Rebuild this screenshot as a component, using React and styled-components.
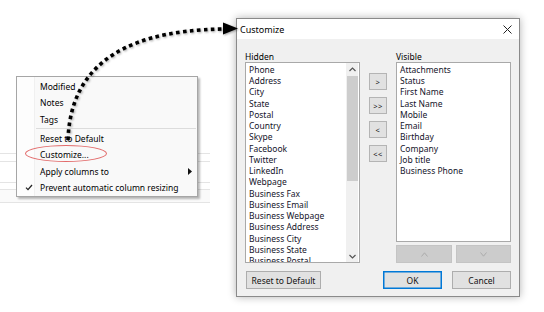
import React from "react";
import styled, { createGlobalStyle } from "styled-components";

const hiddenFields = [
  "Phone", "Address", "City", "State", "Postal", "Country", "Skype",
  "Facebook", "Twitter", "LinkedIn", "Webpage", "Business Fax",
  "Business Email", "Business Webpage", "Business Address",
  "Business City", "Business State", "Business Postal",
];

const visibleFields = [
  "Attachments", "Status", "First Name", "Last Name", "Mobile", "Email",
  "Birthday", "Company", "Job title", "Business Phone",
];

const menuItems = [
  { label: "Modified" },
  { label: "Notes" },
  { label: "Tags" },
  { sep: true },
  { label: "Reset to Default" },
  { label: "Customize..." },
  { label: "Apply columns to", sub: true },
  { label: "Prevent automatic column resizing", checked: true },
];

const backdropRows = [7, 20, 6, 12];

const App = () => {
  return (
    <>
      <GlobalStyle />
      <Stage>
        <LeftPane>
          <Backdrop>
            {backdropRows.map((h, i) => (
              <BackdropRow key={i} $h={h} $last={i === backdropRows.length - 1} />
            ))}
          </Backdrop>
        </LeftPane>

        <ContextMenu>
          {menuItems.map((item, i) =>
            item.sep ? (
              <Separator key={i} />
            ) : (
              <MenuItem key={i}>
                <Gutter>
                  {item.checked && (
                    <svg width="8" height="7" viewBox="0 0 8 7">
                      <path d="M1 3.6 L3 5.6 L7 1" fill="none" stroke="#222" strokeWidth="1.3" />
                    </svg>
                  )}
                </Gutter>
                <span>{item.label}</span>
                {item.sub && (
                  <SubArrow>
                    <svg width="4" height="7" viewBox="0 0 4 7">
                      <path d="M0 0 L4 3.5 L0 7 Z" fill="#111" />
                    </svg>
                  </SubArrow>
                )}
              </MenuItem>
            )
          )}
        </ContextMenu>
        <Highlight />

        <Dialog>
          <TitleBar>
            <span>Customize</span>
            <svg width="9" height="9" viewBox="0 0 9 9">
              <path d="M0.5 0.5 L8.5 8.5 M8.5 0.5 L0.5 8.5" stroke="#222" strokeWidth="1" />
            </svg>
          </TitleBar>
          <Body>
            <Columns>
              <Column>
                <Label>Hidden</Label>
                <ListBox $h={201}>
                  <ListItems>
                    {hiddenFields.map((f) => (
                      <ListItem key={f}>{f}</ListItem>
                    ))}
                  </ListItems>
                  <ScrollBar>
                    <ScrollArrow>
                      <svg width="7" height="5" viewBox="0 0 7 5">
                        <path d="M0.5 4 L3.5 1 L6.5 4" fill="none" stroke="#555" strokeWidth="1.2" />
                      </svg>
                    </ScrollArrow>
                    <Track>
                      <Thumb />
                    </Track>
                    <ScrollArrow>
                      <svg width="7" height="5" viewBox="0 0 7 5">
                        <path d="M0.5 1 L3.5 4 L6.5 1" fill="none" stroke="#555" strokeWidth="1.2" />
                      </svg>
                    </ScrollArrow>
                  </ScrollBar>
                </ListBox>
              </Column>

              <MoveButtons>
                <SmallButton>&gt;</SmallButton>
                <SmallButton>&gt;&gt;</SmallButton>
                <SmallButton>&lt;</SmallButton>
                <SmallButton>&lt;&lt;</SmallButton>
              </MoveButtons>

              <Column>
                <Label>Visible</Label>
                <ListBox $h={180}>
                  <ListItems>
                    {visibleFields.map((f) => (
                      <ListItem key={f}>{f}</ListItem>
                    ))}
                  </ListItems>
                </ListBox>
                <OrderRow>
                  <OrderButton>
                    <svg width="7" height="5" viewBox="0 0 7 5">
                      <path d="M0.5 4.5 L3.5 0.8 L6.5 4.5" fill="none" stroke="#a8a8a8" strokeWidth="0.9" />
                    </svg>
                  </OrderButton>
                  <OrderButton>
                    <svg width="7" height="5" viewBox="0 0 7 5">
                      <path d="M0.5 0.5 L3.5 4.2 L6.5 0.5" fill="none" stroke="#a8a8a8" strokeWidth="0.9" />
                    </svg>
                  </OrderButton>
                </OrderRow>
              </Column>
            </Columns>

            <Footer>
              <Button $w={75}>Reset to Default</Button>
              <FooterRight>
                <Button $w={59} $primary>OK</Button>
                <Button $w={59}>Cancel</Button>
              </FooterRight>
            </Footer>
          </Body>
        </Dialog>

        <ArrowLayer width="544" height="312" viewBox="0 0 544 312">
          <path
            d="M68 140 C70 78 108 30 225 29"
            fill="none"
            stroke="#000"
            strokeWidth="3.6"
            strokeDasharray="3.6 3.4"
          />
          <polygon points="223,22.5 238,28.5 223,34.5" fill="#000" />
        </ArrowLayer>
      </Stage>
    </>
  );
};

const GlobalStyle = createGlobalStyle`
  html, body {
    margin: 0;
    padding: 0;
    background: #fff;
  }
  body {
    font-family: "Noto Sans", "Open Sans", sans-serif;
    color: #111;
  }
`;

const Stage = styled.div`
  position: relative;
  width: 544px;
  height: 312px;
  overflow: hidden;
  display: flex;
  background: #fff;
`;

const LeftPane = styled.div`
  width: 236px;
  flex-shrink: 0;
  padding-top: 153px;
  box-sizing: border-box;
`;

const Backdrop = styled.div`
  width: 210px;
  display: flex;
  flex-direction: column;
`;

const BackdropRow = styled.div`
  height: ${(p) => p.$h}px;
  border-top: 1px solid #e4e4e4;
  border-bottom: ${(p) => (p.$last ? "1px solid #e4e4e4" : "none")};
  background: ${(p) => (p.$last ? "#fafafa" : "transparent")};
`;

const ContextMenu = styled.div`
  position: absolute;
  left: 16px;
  top: 76px;
  width: 182px;
  box-sizing: border-box;
  border: 1px solid #a6a6a6;
  box-shadow: 2px 2px 2px rgba(0, 0, 0, 0.28);
  padding: 1px 0 0;
  font-size: 8.5px;
  color: #000;
  background: linear-gradient(to right, #fdfdfd 0, #fdfdfd 17px, #f0f0f0 17px, #f0f0f0 18px, #f9f9f9 18px);
`;

const MenuItem = styled.div`
  height: 16.5px;
  display: flex;
  align-items: center;
  white-space: nowrap;
`;

const Gutter = styled.div`
  width: 23px;
  display: flex;
  justify-content: center;
  align-items: center;
`;

const SubArrow = styled.div`
  margin-left: auto;
  margin-right: 5px;
  display: flex;
  align-items: center;
`;

const Separator = styled.div`
  height: 1px;
  margin: 0.5px 1px 1px 19px;
  background: #dcdcdc;
`;

const Highlight = styled.div`
  position: absolute;
  left: 25px;
  top: 145px;
  width: 82px;
  height: 17px;
  border: 1.4px solid #e26a6a;
  border-radius: 50%;
  box-sizing: border-box;
`;

const Dialog = styled.div`
  margin-top: 18px;
  width: 284px;
  height: 279px;
  box-sizing: border-box;
  border: 1px solid #8a8a8a;
  background: #f0f0f0;
  box-shadow: 0 0 8px rgba(0, 0, 0, 0.3);
  display: flex;
  flex-direction: column;
  font-size: 8.5px;
`;

const TitleBar = styled.div`
  height: 20px;
  background: #fff;
  display: flex;
  align-items: center;
  justify-content: space-between;
  padding: 0 7px 0 3px;
  font-size: 9px;
  color: #000;
  flex-shrink: 0;
`;

const Body = styled.div`
  flex: 1;
  padding: 10px 8px 0 8px;
  display: flex;
  flex-direction: column;
`;

const Columns = styled.div`
  display: grid;
  grid-template-columns: 115px 1fr 115px;
`;

const Column = styled.div`
  display: flex;
  flex-direction: column;
`;

const Label = styled.div`
  height: 11px;
  padding-top: 2px;
  line-height: 11px;
  color: #000;
`;

const ListBox = styled.div`
  height: ${(p) => p.$h}px;
  box-sizing: border-box;
  border: 1px solid #a9a9a9;
  background: #fff;
  display: flex;
  overflow: hidden;
`;

const ListItems = styled.div`
  flex: 1;
  padding: 0.8px 0 0 3px;
  overflow: hidden;
`;

const ListItem = styled.div`
  height: 11.25px;
  line-height: 11.25px;
  white-space: nowrap;
  color: #14142a;
`;

const ScrollBar = styled.div`
  width: 12px;
  margin: 0 1px 0 0;
  background: #f0f0f0;
  display: flex;
  flex-direction: column;
`;

const ScrollArrow = styled.div`
  height: 12px;
  display: flex;
  align-items: center;
  justify-content: center;
  flex-shrink: 0;
`;

const Track = styled.div`
  flex: 1;
  padding-top: 1px;
`;

const Thumb = styled.div`
  height: 105px;
  margin: 0 0.5px;
  background: #cdcdcd;
`;

const MoveButtons = styled.div`
  display: flex;
  flex-direction: column;
  align-items: center;
  gap: 7px;
  padding-top: 24px;
`;

const SmallButton = styled.div`
  width: 18px;
  height: 17px;
  box-sizing: border-box;
  border: 1px solid #b4b4b4;
  background: #e1e1e1;
  display: flex;
  align-items: center;
  justify-content: center;
  font-size: 7.5px;
  letter-spacing: 0.5px;
  color: #222;
`;

const OrderRow = styled.div`
  margin-top: 3px;
  display: grid;
  grid-template-columns: 56px 55px;
  gap: 4px;
`;

const OrderButton = styled.div`
  height: 18px;
  background: #cccccc;
  border: 1px solid #c4c4c4;
  box-sizing: border-box;
  display: flex;
  align-items: center;
  justify-content: center;
`;

const Footer = styled.div`
  margin-top: 8px;
  display: flex;
  justify-content: space-between;
  padding-left: 1px;
`;

const FooterRight = styled.div`
  display: flex;
  gap: 10px;
`;

const Button = styled.div`
  width: ${(p) => p.$w}px;
  height: 18px;
  box-sizing: border-box;
  border: 1px solid ${(p) => (p.$primary ? "#0078d7" : "#adadad")};
  box-shadow: ${(p) => (p.$primary ? "inset 0 0 0 0.5px #0078d7" : "none")};
  background: #e1e1e1;
  display: flex;
  align-items: center;
  justify-content: center;
  color: #111;
`;

const ArrowLayer = styled.svg`
  position: absolute;
  left: 0;
  top: 0;
  pointer-events: none;
  filter: drop-shadow(1px 1.5px 1px rgba(0, 0, 0, 0.35));
`;

export default App;
